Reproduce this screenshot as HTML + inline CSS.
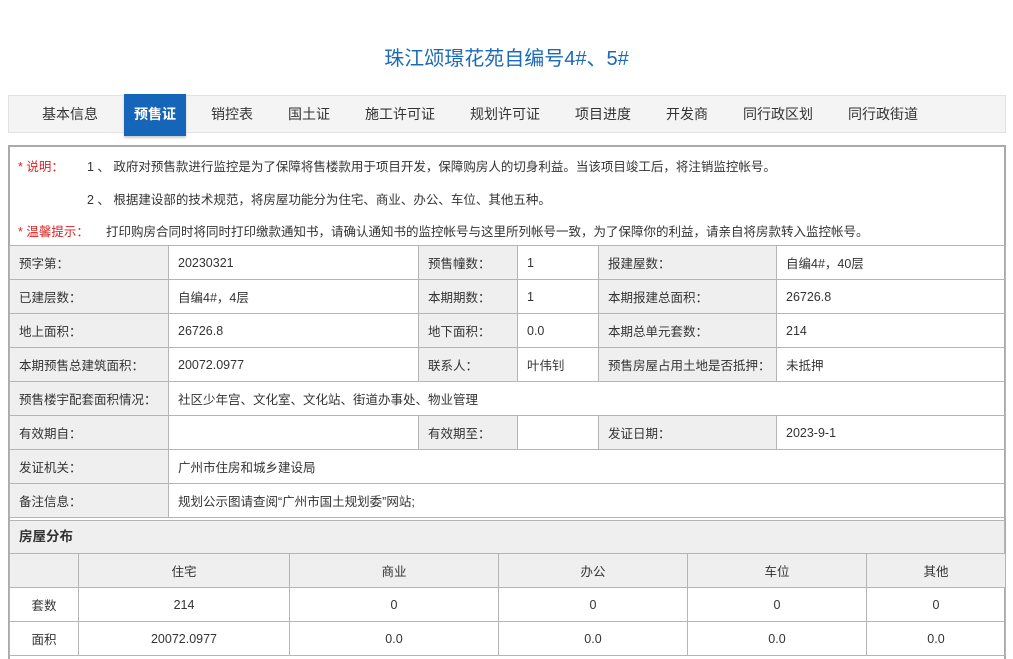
<!DOCTYPE html>
<html><head><meta charset="utf-8"><style>
*{margin:0;padding:0;box-sizing:border-box}
body{width:1013px;height:659px;background:#fff;font-family:"Liberation Sans","Noto Sans CJK SC",sans-serif;font-size:13px;color:#333;position:relative;overflow:hidden}
.a{position:absolute}
.title{left:0;width:1013px;top:42px;text-align:center;color:#1a6ab8;font-size:20px}
.nav{left:8px;top:95px;width:998px;height:38px;background:#f4f4f4;border:1px solid #e2e2e2}
.tab{top:95px;height:38px;line-height:38px;font-size:14px;color:#333;text-align:center}
.act{left:124px;top:94px;width:62px;height:42px;background:#1566b8;color:#fff;font-weight:bold;line-height:40px;text-align:center;font-size:14px;box-shadow:0 2px 2px #ccc}
.box{left:8px;top:145px;width:998px;height:514px;border:2px solid #aaa;border-bottom:none}
.note{font-size:12.5px;color:#333;white-space:nowrap}
.red{color:#d22}
table{border-collapse:collapse;position:absolute;table-layout:fixed}
td{border:1px solid #b5b5b5;height:34px;padding:0 9px;font-size:12.5px;white-space:nowrap;overflow:hidden}
td.l{background:#efefef}
.t2 td{text-align:center;padding:0}
</style></head><body>
<div class="a title">珠江颂璟花苑自编号4#、5#</div>
<div class="a nav"></div>
<div class="a tab" style="left:30px;width:80px">基本信息</div>
<div class="a act">预售证</div>
<div class="a tab" style="left:202px;width:60px">销控表</div>
<div class="a tab" style="left:279px;width:60px">国土证</div>
<div class="a tab" style="left:355px;width:90px">施工许可证</div>
<div class="a tab" style="left:460px;width:90px">规划许可证</div>
<div class="a tab" style="left:568px;width:70px">项目进度</div>
<div class="a tab" style="left:657px;width:60px">开发商</div>
<div class="a tab" style="left:733px;width:90px">同行政区划</div>
<div class="a tab" style="left:838px;width:90px">同行政街道</div>
<div class="a box"></div>
<div class="a note" style="left:18px;top:156px"><span class="red">* 说明：</span></div>
<div class="a note" style="left:87px;top:156px">1 、 政府对预售款进行监控是为了保障将售楼款用于项目开发，保障购房人的切身利益。当该项目竣工后，将注销监控帐号。</div>
<div class="a note" style="left:87px;top:189px">2 、 根据建设部的技术规范，将房屋功能分为住宅、商业、办公、车位、其他五种。</div>
<div class="a note" style="left:18px;top:221px"><span class="red">* 温馨提示：</span></div>
<div class="a note" style="left:106px;top:221px">打印购房合同时将同时打印缴款通知书，请确认通知书的监控帐号与这里所列帐号一致，为了保障你的利益，请亲自将房款转入监控帐号。</div>
<table style="left:9px;top:245px;width:996px">
<colgroup><col style="width:159px"><col style="width:250px"><col style="width:99px"><col style="width:81px"><col style="width:178px"><col style="width:229px"></colgroup>
<tr><td class="l">预字第：</td><td>20230321</td><td class="l">预售幢数：</td><td>1</td><td class="l">报建屋数：</td><td>自编4#，40层</td></tr>
<tr><td class="l">已建层数：</td><td>自编4#，4层</td><td class="l">本期期数：</td><td>1</td><td class="l">本期报建总面积：</td><td>26726.8</td></tr>
<tr><td class="l">地上面积：</td><td>26726.8</td><td class="l">地下面积：</td><td>0.0</td><td class="l">本期总单元套数：</td><td>214</td></tr>
<tr><td class="l">本期预售总建筑面积：</td><td>20072.0977</td><td class="l">联系人：</td><td>叶伟钊</td><td class="l">预售房屋占用土地是否抵押：</td><td>未抵押</td></tr>
<tr><td class="l">预售楼宇配套面积情况：</td><td colspan="5">社区少年宫、文化室、文化站、街道办事处、物业管理</td></tr>
<tr><td class="l">有效期自：</td><td></td><td class="l">有效期至：</td><td></td><td class="l">发证日期：</td><td>2023-9-1</td></tr>
<tr><td class="l">发证机关：</td><td colspan="5">广州市住房和城乡建设局</td></tr>
<tr><td class="l">备注信息：</td><td colspan="5">规划公示图请查阅“广州市国土规划委”网站;</td></tr>
</table>
<div class="a" style="left:9px;top:520px;width:996px;height:34px;background:#efefef;border:1px solid #b5b5b5;font-weight:bold;font-size:13.5px;line-height:32px;padding-left:9px">房屋分布</div>
<table class="t2" style="left:9px;top:553px;width:996px">
<colgroup><col style="width:69px"><col style="width:211px"><col style="width:209px"><col style="width:189px"><col style="width:179px"><col style="width:139px"></colgroup>
<tr><td class="l"></td><td class="l">住宅</td><td class="l">商业</td><td class="l">办公</td><td class="l">车位</td><td class="l">其他</td></tr>
<tr><td>套数</td><td>214</td><td>0</td><td>0</td><td>0</td><td>0</td></tr>
<tr><td>面积</td><td>20072.0977</td><td>0.0</td><td>0.0</td><td>0.0</td><td>0.0</td></tr>
</table>
</body></html>
